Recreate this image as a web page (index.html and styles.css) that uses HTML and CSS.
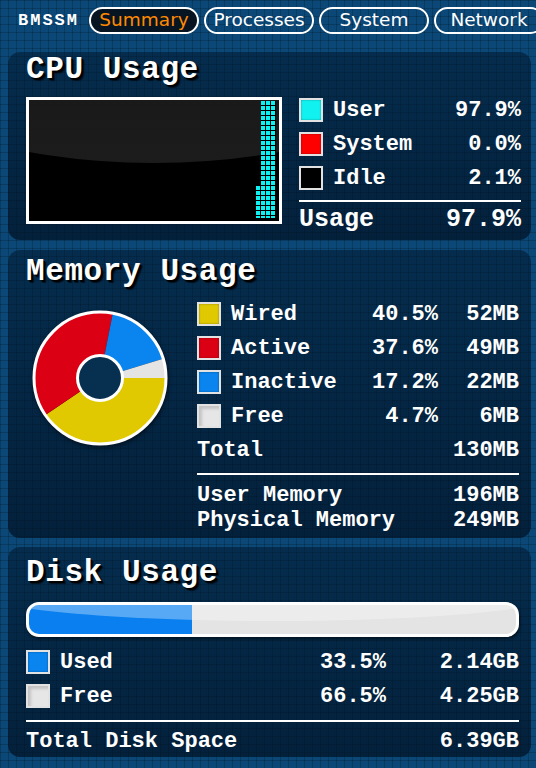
FILE: index.html
```html
<!DOCTYPE html>
<html>
<head>
    <title>BMSSM Summary</title>
    <link rel="stylesheet" href="styles.css">
</head>
<body>
    <div class="nav">
        <div class="brand">BMSSM</div>
        <div class="tab active">Summary</div>
        <div class="tab">Processes</div>
        <div class="tab">System</div>
        <div class="tab">Network</div>
    </div>

    <div class="panel cpu">
        <h2 class="title">CPU Usage</h2>
        <div class="cpu-body">
            <div class="graph">
                <div class="bars">
                    <span class="bar" style="height: 32px;"></span>
                    <span class="bar" style="height: 117px;"></span>
                    <span class="bar" style="height: 117px;"></span>
                    <span class="bar" style="height: 117px;"></span>
                </div>
            </div>
            <div class="legend cpu-legend">
                <div class="row">
                    <span class="swatch cyan"></span>
                    <span class="label">User</span>
                    <span class="val">97.9%</span>
                </div>
                <div class="row">
                    <span class="swatch red"></span>
                    <span class="label">System</span>
                    <span class="val">0.0%</span>
                </div>
                <div class="row">
                    <span class="swatch black"></span>
                    <span class="label">Idle</span>
                    <span class="val">2.1%</span>
                </div>
                <div class="row total big">
                    <span class="label">Usage</span>
                    <span class="val">97.9%</span>
                </div>
            </div>
        </div>
    </div>

    <div class="panel memory">
        <h2 class="title">Memory Usage</h2>
        <div class="mem-body">
            <div class="pie-wrap">
                <svg class="pie" width="140" height="140" viewBox="-70 -70 140 140">
                    <!-- slices clockwise from 3 o'clock: wired, active, inactive, free -->
                    <path d="M0 0 L66 0 A66 66 0 0 1 -54.6 37.1 Z" fill="#e0c900"/>
                    <path d="M0 0 L-54.6 37.1 A66 66 0 0 1 12.8 -64.7 Z" fill="#dc0014"/>
                    <path d="M0 0 L12.8 -64.7 A66 66 0 0 1 63.1 -19.2 Z" fill="#0a84ef"/>
                    <path d="M0 0 L63.1 -19.2 A66 66 0 0 1 66 0 Z" fill="#e4e4e4"/>
                    <circle cx="0" cy="0" r="66" fill="none" stroke="#fff" stroke-width="3"/>
                    <circle cx="0" cy="0" r="22.5" fill="#072f50" stroke="#fff" stroke-width="3"/>
                </svg>
            </div>
            <div class="legend mem-legend">
                <div class="row">
                    <span class="swatch yellow"></span>
                    <span class="label">Wired</span>
                    <span class="pct">40.5%</span>
                    <span class="val">52MB</span>
                </div>
                <div class="row">
                    <span class="swatch red2"></span>
                    <span class="label">Active</span>
                    <span class="pct">37.6%</span>
                    <span class="val">49MB</span>
                </div>
                <div class="row">
                    <span class="swatch blue"></span>
                    <span class="label">Inactive</span>
                    <span class="pct">17.2%</span>
                    <span class="val">22MB</span>
                </div>
                <div class="row">
                    <span class="swatch grey"></span>
                    <span class="label">Free</span>
                    <span class="pct">4.7%</span>
                    <span class="val">6MB</span>
                </div>
                <div class="row">
                    <span class="label">Total</span>
                    <span class="val">130MB</span>
                </div>
                <div class="row small total">
                    <span class="label">User Memory</span>
                    <span class="val">196MB</span>
                </div>
                <div class="row small">
                    <span class="label">Physical Memory</span>
                    <span class="val">249MB</span>
                </div>
            </div>
        </div>
    </div>

    <div class="panel disk">
        <h2 class="title">Disk Usage</h2>
        <div class="diskbar">
            <div class="fill" style="width: 33.5%;"></div>
        </div>
        <div class="legend disk-legend">
            <div class="row">
                <span class="swatch blue"></span>
                <span class="label">Used</span>
                <span class="pct">33.5%</span>
                <span class="val">2.14GB</span>
            </div>
            <div class="row">
                <span class="swatch grey"></span>
                <span class="label">Free</span>
                <span class="pct">66.5%</span>
                <span class="val">4.25GB</span>
            </div>
            <div class="row total">
                <span class="label">Total Disk Space</span>
                <span class="val">6.39GB</span>
            </div>
        </div>
    </div>
</body>
</html>
```

FILE: styles.css
```css
body {
    margin: 0;
    width: 536px;
    height: 768px;
    overflow: hidden;
    font-family: "Liberation Mono", "Courier New", monospace;
    font-weight: bold;
    color: #fff;
    background-color: #0b4877;
    background-image:
        linear-gradient(rgba(0, 0, 0, 0.2) 1px, transparent 1px),
        linear-gradient(90deg, rgba(0, 0, 0, 0.2) 1px, transparent 1px);
    background-size: 8px 8px;
}

/* top tab bar */
.nav {
    display: flex;
    height: 52px;
    padding: 7px 0 0 18px;
    box-sizing: border-box;
}

.brand {
    flex: none;
    width: 71px;
    font-size: 17px;
    line-height: 27px;
    letter-spacing: 2px;
}

.tab {
    flex: none;
    width: 110px;
    height: 27px;
    margin-right: 5px;
    box-sizing: border-box;
    border: 2px solid #fff;
    border-radius: 14px;
    font-family: "DejaVu Sans", sans-serif;
    font-weight: normal;
    font-size: 18.5px;
    line-height: 22px;
    text-align: center;
}

.tab.active {
    background-color: #071523;
    color: #ff8a00;
}

/* panels */
.panel {
    width: 523px;
    margin-left: 8px;
    box-sizing: border-box;
    padding: 0 10px 0 18px;
    border-radius: 12px;
    background: linear-gradient(rgba(0, 22, 44, 0.55), rgba(0, 16, 34, 0.7));
}

.cpu {
    height: 188px;
    margin-bottom: 10px;
}

.memory {
    height: 288px;
    margin-bottom: 9px;
    padding-top: 4px;
}

.disk {
    height: 210px;
    padding-top: 8px;
}

.title {
    margin: 0;
    font-size: 31px;
    line-height: 36px;
    letter-spacing: 0.6px;
    text-shadow: 2px 2px 0 #000, 3px 3px 1px rgba(0, 0, 0, 0.6);
}

/* CPU */
.cpu-body {
    display: flex;
    margin-top: 9px;
}

.graph {
    position: relative;
    width: 256px;
    height: 127px;
    box-sizing: border-box;
    border: 3px solid #fff;
    background: #000;
    overflow: hidden;
}

.graph::before {
    content: "";
    position: absolute;
    left: -60%;
    top: -140px;
    width: 220%;
    height: 203px;
    border-radius: 50%;
    background: linear-gradient(#141414, #1c1c1c);
}

.bars {
    position: absolute;
    right: 3px;
    bottom: 3px;
    display: flex;
    align-items: flex-end;
}

.bar {
    width: 5px;
    background:
        linear-gradient(90deg, transparent 4px, #000 4px) 0 0 / 5px 5px,
        linear-gradient(180deg, transparent 4px, #000 4px) 0 0 / 5px 5px,
        #10f0f0;
}

.legend .row {
    display: flex;
    align-items: center;
    height: 34px;
    font-size: 22px;
}

.cpu-legend {
    flex: 1;
    margin: -4px 0 0 17px;
}

.label {
    flex: 1;
    white-space: nowrap;
}

.val {
    text-align: right;
    white-space: nowrap;
}

.swatch {
    flex: none;
    width: 24px;
    height: 24px;
    margin-right: 10px;
    box-sizing: border-box;
    border: 2px solid #e2e2e2;
    box-shadow: inset 0 0 2px rgba(0, 0, 0, 0.4);
}

.cyan { background: #11f2f0; }
.red { background: #ff0000; }
.black { background: #000; }
.yellow { background: #e0c900; }
.red2 { background: #dc0014; }
.blue { background: #0a84ef; }
.grey { background: #e6e6e6; box-shadow: inset 3px 3px 3px rgba(0, 0, 0, 0.15); }

.legend .row.total {
    border-top: 2px solid #fff;
    margin-top: 5px;
}

.cpu-legend .big {
    height: 31px;
    font-size: 25px;
    padding-top: 2px;
}

/* memory */
.mem-body {
    display: flex;
    margin-top: 7px;
}

.pie-wrap {
    flex: none;
    width: 171px;
    padding: 11px 0 0 0;
}

.pie {
    display: block;
    margin-left: 4px;
    filter: drop-shadow(1px 2px 2px rgba(0, 0, 0, 0.5));
}

.mem-legend {
    flex: 1;
    padding-right: 2px;
}

.pct {
    width: 90px;
    text-align: right;
}

.mem-legend .val {
    width: 81px;
}

.mem-legend .row.small {
    height: 25px;
}

.mem-legend .row.total {
    margin-top: 6px;
    padding-top: 8px;
}

/* disk */
.diskbar {
    position: relative;
    height: 35px;
    margin: 11px 2px 0 0;
    box-sizing: border-box;
    border: 3px solid #fff;
    border-radius: 13px;
    background: #e4e4e4;
    overflow: hidden;
    box-shadow: 1px 2px 3px rgba(0, 0, 0, 0.5);
}

.fill {
    height: 100%;
    background: #0a80f0;
}

.diskbar::after {
    content: "";
    position: absolute;
    left: -10%;
    top: -40px;
    width: 120%;
    height: 56px;
    border-radius: 50%;
    background: rgba(255, 255, 255, 0.32);
}

.disk-legend {
    margin-top: 8px;
    padding-right: 2px;
}

.disk-legend .pct {
    width: 200px;
}

.disk-legend .val {
    width: 133px;
}

.disk-legend .row.total {
    margin-top: 7px;
    padding-top: 2px;
}
```
